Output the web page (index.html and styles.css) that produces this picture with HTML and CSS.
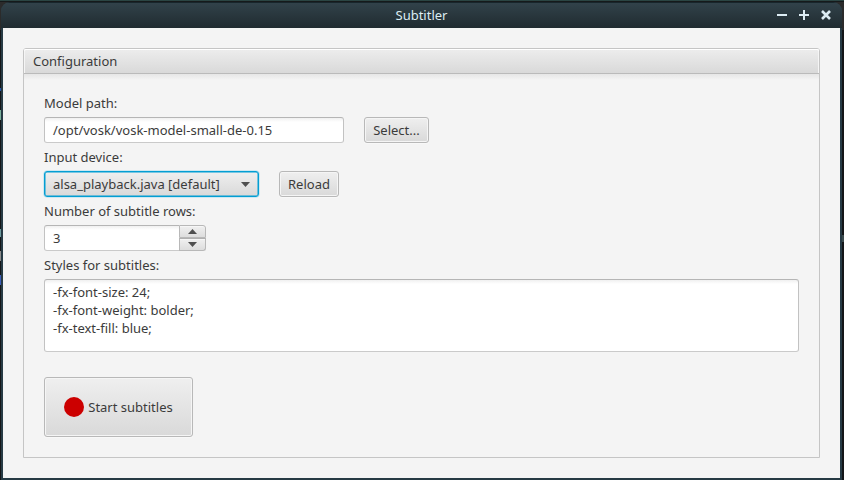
FILE: index.html
```
<!DOCTYPE html>
<html lang="en">
<head>
<meta charset="utf-8">
<title>Subtitler</title>
<link rel="stylesheet" href="styles.css">
</head>
<body>
<div class="window">
  <header class="titlebar">
    <span class="title">Subtitler</span>
    <svg class="controls" width="54" height="12" viewBox="0 0 54 12" fill="none" stroke="#dcecf3" stroke-width="2">
      <path d="M0 6h10M22 6h10M27 1v10"/>
      <path d="M45 2l8 8M53 2l-8 8" stroke-width="2.6"/>
    </svg>
  </header>
  <main class="content">
    <section class="panel">
      <h1 class="panel-title">Configuration</h1>
      <div class="panel-body">
        <div class="label">Model path:</div>
        <div class="row">
          <div class="field path">/opt/vosk/vosk-model-small-de-0.15</div>
          <div class="button select">Select...</div>
        </div>
        <div class="label">Input device:</div>
        <div class="row">
          <div class="combo">alsa_playback.java [default]
            <svg width="9" height="5" viewBox="0 0 9 5"><path d="M0 0h9L4.5 5z" fill="#4f4f4f"/></svg>
          </div>
          <div class="button reload">Reload</div>
        </div>
        <div class="label">Number of subtitle rows:</div>
        <div class="row spinner">
          <div class="field count">3</div>
          <div class="steps">
            <div class="step"><svg width="9" height="5" viewBox="0 0 9 5"><path d="M0 5h9L4.5 0z" fill="#4f4f4f"/></svg></div>
            <div class="step"><svg width="9" height="5" viewBox="0 0 9 5"><path d="M0 0h9L4.5 5z" fill="#4f4f4f"/></svg></div>
          </div>
        </div>
        <div class="label">Styles for subtitles:</div>
        <div class="field area">-fx-font-size: 24;<br>-fx-font-weight: bolder;<br>-fx-text-fill: blue;</div>
        <div class="button start"><span class="dot"></span>Start subtitles</div>
      </div>
    </section>
  </main>
</div>
<i class="fleck blue-dim"></i><i class="fleck green"></i><i class="fleck teal"></i><i class="fleck gray"></i><i class="fleck blue"></i><i class="fleck right"></i>
</body>
</html>
```
FILE: styles.css
```
* { box-sizing: border-box; }
body {
  margin: 0;
  width: 844px;
  height: 480px;
  overflow: hidden;
  padding: 2px 2px 0 1px;
  background: linear-gradient(#2b4543 1px, #161a1b 1px, #161a1b 2px, transparent 2px), linear-gradient(#2b2b2b 30px, #141618 30px);
  font: 13px/18px "Noto Sans", sans-serif;
  color: #3b3b3b;
}
.window {
  height: 478px;
  padding: 0 2px 2px;
  border-radius: 9px 9px 0 0;
  background: #263a44;
  overflow: hidden;
}
.titlebar {
  position: relative;
  display: flex;
  justify-content: center;
  align-items: center;
  height: 26px;
  margin: 0 -2px;
  background: linear-gradient(#32434b, #202b30);
  box-shadow: inset 0 1px #18262c;
  color: #dcecf3;
}
.title { padding-bottom: 1px; }
.controls { position: absolute; right: 11px; top: 7px; }
.content { height: 450px; padding: 20px; background: #f4f4f4; }
.panel { height: 410px; border: 1px solid #c5c5c5; border-radius: 3px 3px 0 0; }
.panel-title {
  height: 25px;
  margin: 0;
  padding: 3px 9px;
  border-bottom: 1px solid #bababa;
  border-radius: 2px 2px 0 0;
  background: linear-gradient(#ededed, #d9d9d9);
  box-shadow: inset 0 1px #fff, inset 1px 0 #f5f5f5, inset -1px 0 #f5f5f5;
  font: inherit;
}
.panel-body {
  display: flex;
  flex-direction: column;
  gap: 5px;
  padding: 20px;
  background: linear-gradient(#e6e6e6, #f4f4f4 6px);
}
.row { display: flex; gap: 20px; }
.field, .button, .combo, .step { border: 1px solid #b8b8b8; border-radius: 3px; }
.field {
  height: 26px;
  padding: 3px 8px;
  border-color: #b5b5b5 #c2c2c2 #cacaca;
  background: linear-gradient(#f0f0f0, #fff 4px);
}
.path { width: 300px; }
.button, .combo {
  display: flex;
  align-items: center;
  justify-content: center;
  height: 26px;
  background: linear-gradient(#efefef, #d9d9d9);
  box-shadow: inset 0 0 0 1px #f5f5f5, 0 1px #f8f8f8;
}
.select { width: 65px; }
.reload { width: 60px; }
.combo {
  width: 215px;
  padding: 0 8px;
  justify-content: space-between;
  border-color: #039ed3;
  box-shadow: inset 0 0 0 .5px #039ed3, 0 0 0 .5px #a5dbed;
}
.spinner { gap: 0; }
.count { width: 135px; border-right: 0; border-radius: 3px 0 0 3px; }
.steps { width: 27px; }
.step {
  display: flex;
  align-items: center;
  justify-content: center;
  height: 13px;
  border-radius: 0 3px 0 0;
  background: linear-gradient(#f0f0f0, #dddddd);
  box-shadow: inset 0 1px #f6f6f6;
}
.step + .step { border-top-color: #b0b0b0; border-radius: 0 0 3px; }
.area { height: 73px; }
.start { width: 149px; height: 60px; margin-top: 20px; gap: 4px; }
.dot { width: 20px; height: 20px; border-radius: 50%; background: #cc0000; }
.fleck { position: absolute; left: 0; width: 1px; }
.blue-dim { top: 88px; height: 3px; background: #2754a8; }
.green { top: 110px; height: 10px; background: #7bb09c; }
.teal { top: 229px; height: 8px; background: #6d9a9d; }
.gray { top: 251px; height: 10px; background: #8b8b8b; }
.blue { top: 275px; height: 10px; background: #3c5cb8; }
.right { left: 842px; top: 235px; width: 2px; height: 7px; background: #3c4b4d; }
```
